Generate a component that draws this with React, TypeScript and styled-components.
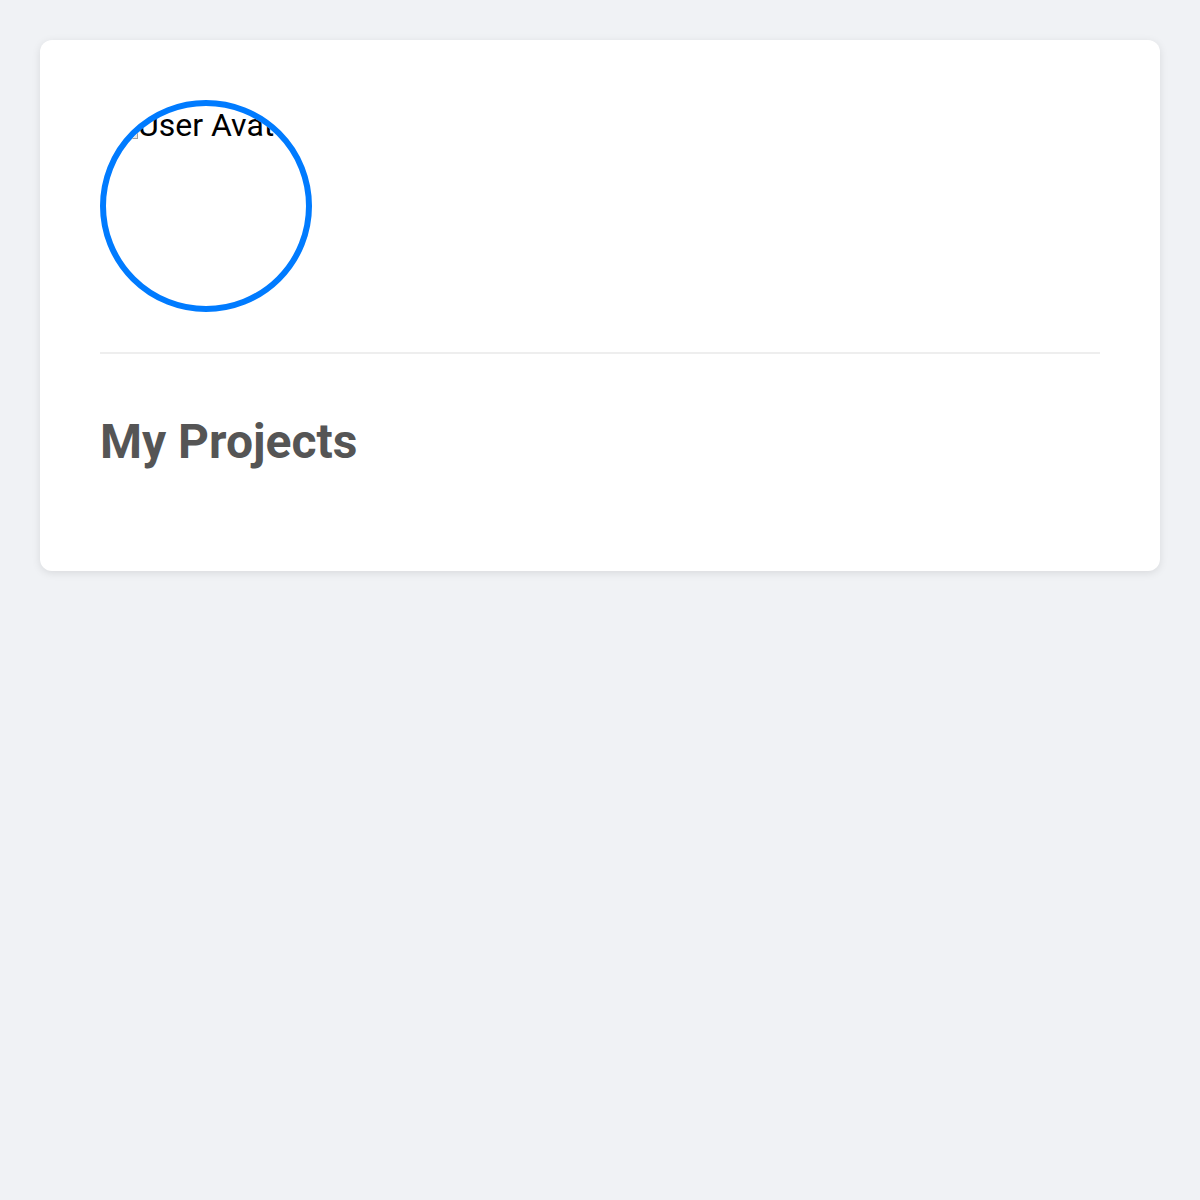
import { FC } from "react";
import styled, { createGlobalStyle } from "styled-components";

const GlobalStyle = createGlobalStyle`
  html, body {
    margin: 0;
    padding: 0;
    background: #f0f2f5;
    font-family: Roboto, "Noto Sans", "Liberation Sans", sans-serif;
  }
`;

const Page = styled.div`
  min-height: 1200px;
  padding: 40px;
  box-sizing: border-box;
`;

const Card = styled.section`
  background: #ffffff;
  border-radius: 12px;
  box-shadow: 0 2px 8px rgba(0, 0, 0, 0.1);
  padding: 60px;
`;

const ProfileHeader = styled.div`
  display: flex;
  align-items: flex-start;
`;

const Avatar = styled.div`
  width: 200px;
  height: 200px;
  border: 6px solid #007bff;
  border-radius: 50%;
  overflow: hidden;
  position: relative;
  flex-shrink: 0;
`;

const BrokenIcon = styled.span`
  position: absolute;
  left: 16px;
  top: 17px;
  width: 16px;
  height: 16px;
  border: 1px solid #a0a0a0;
  background: #e6e6e6;
  box-sizing: border-box;
`;

const AltText = styled.span`
  display: block;
  padding-left: 32px;
  font-size: 32px;
  line-height: 38px;
  color: #000;
  white-space: nowrap;
`;

const Divider = styled.hr`
  border: none;
  border-top: 2px solid #eeeeee;
  margin: 40px 0 0;
`;

const SectionTitle = styled.h2`
  margin: 60px 0 0;
  font-size: 48px;
  line-height: 56px;
  font-weight: 700;
  color: #555555;
`;

const Projects = styled.div`
  min-height: 41px;
`;

const App: FC = () => {
  return (
    <>
      <GlobalStyle />
      <Page>
        <Card>
          <ProfileHeader>
            <Avatar>
              <BrokenIcon />
              <AltText>User Avatar</AltText>
            </Avatar>
          </ProfileHeader>
          <Divider />
          <SectionTitle>My Projects</SectionTitle>
          <Projects />
        </Card>
      </Page>
    </>
  );
};

export default App;
